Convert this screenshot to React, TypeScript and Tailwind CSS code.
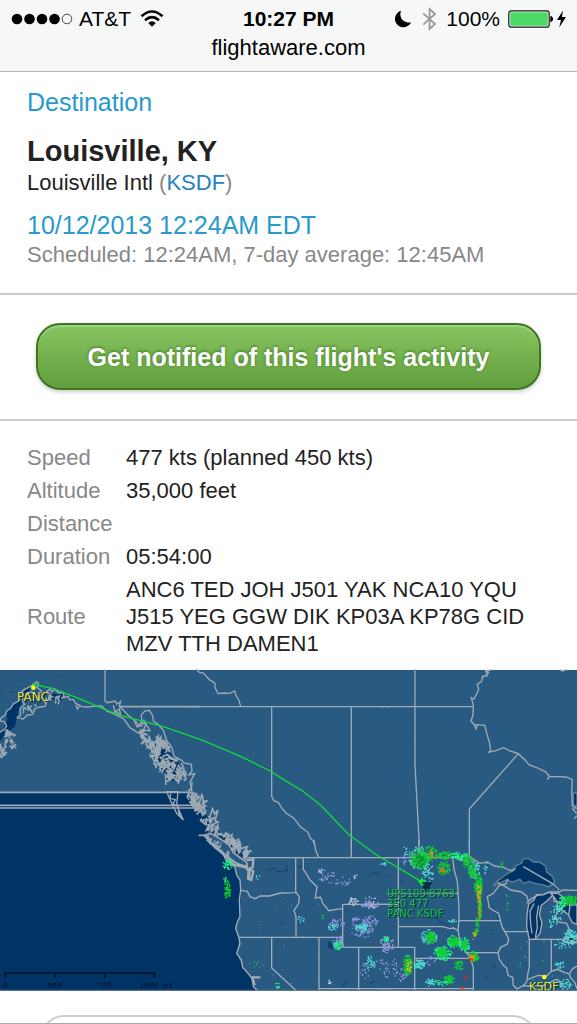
import React from "react";

type Point = [number, number];

const CYAN = "#22ee88";
const AQUA = "#54d8d0";
const GREEN = "#10cc30";
const LILAC = "#8e96dc";
const PALE = "#b9bde0";

function createRandom(seed: number) {
  let state = seed;
  return () => {
    state = (state * 1664525 + 1013904223) % 4294967296;
    return state / 4294967296;
  };
}

/** Scatter of small square echoes inside an ellipse. */
function echoPath(seed: number, cx: number, cy: number, rx: number, ry: number, count: number) {
  const random = createRandom(seed);
  let d = "";
  for (let i = 0; i < count; i++) {
    const angle = random() * Math.PI * 2;
    const radius = Math.pow(random(), 0.6);
    const x = Math.round(cx - 2 + Math.cos(angle) * radius * rx * 1.1);
    const y = Math.round(cy - 2 + Math.sin(angle) * radius * ry * 1.1);
    d += `M${x} ${y}h4v4h-4z`;
  }
  return d;
}

/** Ragged inlet strokes that wander around a centre line. */
function fjordPath(seed: number, line: Point[], spread: number, perSegment: number) {
  const random = createRandom(seed);
  let d = "";
  for (let i = 0; i < line.length - 1; i++) {
    const [x1, y1] = line[i];
    const [x2, y2] = line[i + 1];
    for (let n = 0; n < perSegment; n++) {
      const t = random();
      let x = x1 + (x2 - x1) * t + (random() - 0.5) * spread * 2;
      let y = y1 + (y2 - y1) * t + (random() - 0.5) * spread;
      d += `M${Math.round(x)} ${Math.round(y)}`;
      for (let k = 0; k < 5; k++) {
        x += (random() - 0.48) * 13;
        y += (random() - 0.48) * 17;
        d += `L${Math.round(x)} ${Math.round(y)}`;
      }
    }
  }
  return d;
}

type Echo = [number, number, number, number, number, string];

const westEchoes: Echo[] = [
  [115, 74, 15, 13, 45, CYAN],
  [108, 118, 6, 8, 8, CYAN],
  [112, 150, 9, 26, 55, GREEN],
  [410, 110, 22, 22, 28, LILAC],
  [396, 92, 12, 8, 9, PALE],
  [458, 125, 20, 16, 20, LILAC],
  [498, 110, 6, 10, 6, PALE],
  [583, 72, 10, 4, 8, AQUA],
  [490, 185, 15, 12, 32, PALE],
  [540, 195, 26, 10, 48, LILAC],
  [545, 188, 22, 17, 20, PALE],
  [440, 250, 22, 12, 40, LILAC],
  [430, 262, 14, 8, 22, AQUA],
  [520, 262, 38, 28, 80, LILAC],
  [540, 245, 22, 20, 40, LILAC],
  [495, 238, 10, 6, 16, LILAC],
  [515, 264, 17, 12, 55, AQUA],
  [588, 298, 12, 7, 28, CYAN],
  [588, 322, 13, 17, 30, LILAC],
  [445, 306, 15, 20, 45, LILAC],
  [446, 316, 14, 12, 42, CYAN],
  [333, 240, 9, 12, 10, AQUA],
  [396, 232, 4, 12, 4, GREEN],
  [543, 368, 18, 20, 35, AQUA],
  [525, 392, 14, 22, 18, LILAC],
  [590, 386, 8, 25, 12, LILAC],
  [419, 426, 5, 5, 9, PALE],
  [262, 436, 8, 11, 10, CYAN],
  [198, 374, 22, 10, 5, GREEN],
  [205, 110, 8, 28, 4, AQUA],
  [310, 250, 130, 180, 15, "#3a8aa4"],
];

const eastEchoes: Echo[] = [
  [118, 55, 28, 33, 120, AQUA],
  [119, 58, 25, 27, 190, GREEN],
  [120, 62, 16, 16, 60, "#07912c"],
  [152, 42, 19, 22, 75, GREEN],
  [153, 40, 10, 13, 22, "#b1a51b"],
  [145, 98, 17, 26, 48, AQUA],
  [192, 46, 22, 11, 65, GREEN],
  [192, 85, 18, 20, 75, GREEN],
  [189, 92, 7, 8, 16, "#c77b14"],
  [235, 48, 28, 11, 72, CYAN],
  [263, 66, 14, 20, 75, GREEN],
  [283, 87, 15, 26, 42, AQUA],
  [276, 92, 11, 20, 65, GREEN],
  [295, 135, 11, 31, 135, GREEN],
  [297, 160, 6, 26, 36, "#dfac17"],
  [300, 202, 5, 36, 62, GREEN],
  [299, 196, 3, 45, 30, "#d79b13"],
  [291, 255, 5, 25, 34, GREEN],
  [283, 285, 6, 16, 18, "#a4ae20"],
  [80, 34, 10, 14, 12, AQUA],
  [72, 60, 7, 12, 10, LILAC],
  [315, 82, 6, 27, 9, AQUA],
  [366, 74, 6, 8, 10, GREEN],
  [382, 184, 4, 30, 8, GREEN],
  [148, 291, 22, 20, 80, AQUA],
  [152, 293, 14, 16, 110, GREEN],
  [222, 305, 20, 18, 85, CYAN],
  [222, 305, 14, 13, 90, GREEN],
  [254, 315, 15, 20, 65, CYAN],
  [254, 314, 8, 13, 48, GREEN],
  [190, 340, 25, 20, 95, CYAN],
  [188, 337, 15, 13, 80, GREEN],
  [281, 350, 15, 16, 62, GREEN],
  [278, 354, 10, 10, 28, "#df9813"],
  [274, 358, 6, 4, 10, "#d22b18"],
  [84, 378, 13, 30, 125, GREEN],
  [87, 376, 7, 18, 24, "#d2bc17"],
  [118, 373, 15, 13, 70, AQUA],
  [152, 364, 17, 14, 13, LILAC],
  [237, 377, 14, 14, 35, GREEN],
  [208, 419, 17, 12, 55, GREEN],
  [184, 429, 20, 8, 24, CYAN],
  [151, 428, 13, 11, 30, AQUA],
  [249, 445, 5, 5, 8, "#d64718"],
  [256, 412, 5, 12, 8, "#bf3119"],
  [20, 302, 20, 13, 22, LILAC],
  [21, 300, 9, 5, 16, CYAN],
  [25, 322, 16, 12, 22, LILAC],
  [45, 380, 8, 28, 14, LILAC],
  [8, 375, 10, 35, 10, LILAC],
  [65, 403, 16, 23, 22, LILAC],
  [222, 242, 15, 4, 14, AQUA],
  [570, 181, 24, 13, 110, GREEN],
  [546, 190, 11, 17, 50, CYAN],
  [533, 219, 20, 20, 42, AQUA],
  [518, 250, 12, 14, 20, AQUA],
  [573, 289, 20, 19, 90, AQUA],
  [549, 311, 28, 14, 30, AQUA],
  [540, 374, 14, 10, 20, AQUA],
  [556, 433, 18, 14, 38, AQUA],
  [485, 365, 90, 60, 12, "#419cb2"],
];

function Echoes({ items, seed }: { items: Echo[]; seed: number }) {
  return (
    <g stroke="none">
      {items.map(([cx, cy, rx, ry, count, fill], i) => (
        <path key={i} d={echoPath(seed + i * 97, cx, cy, rx, ry, count)} fill={fill} />
      ))}
    </g>
  );
}

function FlightMap() {
  return (
    <svg
      viewBox="0 0 1731 963"
      className="block h-auto w-full shrink-0 overflow-visible bg-[#295b82]"
      role="img"
      aria-label="Flight track from PANC to KSDF"
    >
      {/* Pacific */}
      <path
        d="M0 367H562L582 410 617 430 628 460 620 510 645 532 680 570 705 592 710 620 722 640 720 740 707 775 717 805 710 850 728 890 755 925 762 950 773 963H0Z"
        fill="#003366"
      />

      {/* Alaska and the north-west coast */}
      <g transform="translate(0 -15)" fill="none" stroke="#9da9b2" strokeWidth="4">
        <path
          d="M96 62L72 78 60 108 40 120 18 143 22 165 8 195 0 200V228L18 205 45 185 52 150 65 112 85 82Z"
          fill="#003366"
          stroke="none"
        />
        <path d="M158 86L190 88 188 104 170 110 155 100ZM452 230L488 220 500 255 535 290 548 330 515 350 480 315 462 275Z" fill="#003366" stroke="none" />
        <path d="M96 62L72 74 62 84 60 106 40 116 32 130 20 138 16 150 4 158 0 166M0 168L12 170 20 182 14 192 0 202" />
        <path d="M96 62L110 50 116 56 110 66 124 78 120 100 95 80 76 88 66 106 74 118 60 130 62 150 52 158 70 162 82 150 98 148 104 132 120 126 136 124 140 108 152 104 150 86 140 80 150 72 156 80 165 72 175 84 190 82 192 98 205 94 208 104 220 104 228 116 240 120 232 132 228 120M240 124L262 126 304 122 320 138 345 148 372 162 390 188 418 206" />
        <path d="M315 13V108L322 113 346 108 350 118 362 110 358 124 384 150 408 170 418 184 426 182 424 150 434 138 448 136 458 152 460 168 474 178 490 196 500 226 516 248 522 274 545 286 552 294 574 298 576 318 566 330 584 326 570 352 574 366 578 400 600 430" />
        <path d="M358 125H600" strokeWidth="5" />
        <path d="M340 120L345 142 358 132 362 150 342 136M402 168L412 186 424 172 438 178 430 195 450 198 430 164" />
        <path d={fjordPath(10, [[38, 200], [24, 235], [5, 268]], 13, 10)} />
        <path d={fjordPath(38, [[75, 125], [140, 100], [200, 96]], 11, 6)} />
        <path d={fjordPath(21, [[430, 205], [450, 240], [475, 275], [510, 338]], 15, 17)} strokeWidth="5" />
        <path d={fjordPath(47, [[470, 215], [495, 265], [530, 340]], 16, 22)} strokeWidth="5" />
        <path d={fjordPath(52, [[530, 305], [555, 345]], 14, 14)} />
        <path d={fjordPath(98, [[562, 368], [595, 430]], 9, 14)} />
        <path d="M500 380H534L530 420 550 465 530 445 512 408ZM512 386L510 400 526 404 518 418 534 422 536 444 546 458" />
        <path d="M0 382H562M0 421H594M0 429H600" strokeWidth="5" />
        <path d="M0 86h8M32 80h8M90 44h6M55 66h4M183 30l4 8M145 40h4M190 365h4" stroke="#164b77" />
      </g>

      {/* British Columbia coast and Vancouver Island */}
      <g transform="translate(420 270)" fill="none" stroke="#9da9b2" strokeWidth="5">
        <path d="M208 196L230 210 262 232 290 262 312 280 328 296 322 308 296 296 272 268 246 244 216 224Z" fill="#0a3a6c" stroke="none" />
        <path d={fjordPath(74, [[150, 110], [183, 140], [206, 195]], 9, 15)} />
        <path d={fjordPath(62, [[204, 202], [245, 226], [278, 250], [322, 290]], 8, 10)} />
        <path d="M178 130L186 102 190 125 203 122 184 134M208 174L218 146 224 162 234 150 225 182 234 186 212 196M250 230L258 218 266 230 276 224 272 250M290 254L296 240 302 266 322 260 312 278 328 280" />
        <path
          d="M192 226L212 220 240 236 268 256 280 278 302 294 320 307 322 319 298 314 278 304 260 293 242 274 221 257Z"
          fill="#295b82"
        />
        <path d="M198 228L212 240 210 250 232 262 248 278 268 294 290 310 320 322M176 226H192" />
        <path d={fjordPath(112, [[205, 236], [232, 260], [268, 292]], 4, 7)} strokeWidth="3" />
      </g>

      {/* Territories and provinces */}
      <g transform="translate(570 -15)" fill="none" stroke="#a0aab3" strokeWidth="4">
        <path d="M20 12L28 22 40 24 58 44 74 54 76 70 84 86 105 84 118 86 134 78 138 92 146 104 152 124M0 125H600M245 125V394L252 408 265 412 276 430 288 444 310 458 332 486 354 502 360 518 372 530 374 540M484 125V540" />
      </g>
      <g transform="translate(1140 -15)" fill="none" stroke="#a0aab3" strokeWidth="4">
        <path d="M0 125H278M105 12V300L118 540M334 14L318 20 322 32 308 34 304 50 292 58 296 74 290 86 282 102 274 98 280 120 279 150 273 168 282 178 314 181 322 212 329 235 332 258 324 262 350 256 371 248 390 258 415 266 434 284 448 300 466 306 496 320 508 334 502 344 508 334 558 336 577 344 575 380 577 424 591 430M415 266L268 432V540M282 178L288 192 292 180M315 14L326 24 306 38M540 14L546 18 560 14M577 430L588 444 591 440M582 461L591 452" />
        <path d="M580 384H591V422H580ZM582 431H591V447Z" fill="#003366" stroke="#7e94a8" strokeWidth="3" />
      </g>

      {/* Western states */}
      <g transform="translate(570 510)" fill="none" stroke="#a3acb5" strokeWidth="4">
        <path
          d="M50 0L64 12 75 24 98 42 110 60 135 82 140 105 150 120 152 150 148 180 150 230 142 246 137 265 147 294 150 312 140 340 154 360 158 382 176 402 186 416 190 440 203 452"
        />
        <path d="M166 53H600M317 53V156L328 170 326 190 312 212 318 230V291M340 53V88L352 106 360 120 381 140 376 174 392 172 398 190 412 206 416 212 440 208 458 206M152 151L172 154 180 170 196 176 210 168 238 168 272 159 317 158M144 292H460M245 292V384L319 452M387 292V452M458 193V322M458 193H600M458 322H600M506 322V452M387 446H600M371 0L378 34 386 52M484 0V53" />
        <path d="M170 60L190 58 188 82 176 86 190 94 184 120 174 116 176 94 168 82 130 74 116 58M178 92V118M184 412H211M188 416L194 436" strokeWidth="7" />
        <path d={fjordPath(49, [[118, 0], [166, 48]], 8, 12)} />
        <path d="M412 302L430 312 428 328 414 324Z" fill="#103f70" stroke="none" />
        <path d="M235 92L248 84 262 96 292 92 288 66M535 106L548 98 560 102 572 94M454 440L474 424M324 82L336 78M194 280h6M268 250h7M236 327h5M252 350h5M310 398h5M178 346h4M464 206l8 8M540 430l14-8" stroke="#19496f" />
        <Echoes items={westEchoes} seed={41} />
      </g>

      {/* Central states and the Great Lakes */}
      <g transform="translate(1140 510)" fill="none" stroke="#a3acb5" strokeWidth="4">
        <g fill="#003366">
          <path d="M340 138L352 124 372 108 390 96 398 94 407 78 424 70 430 57 445 55 460 66 478 66 496 78 500 96 518 110 524 128 506 140 486 134 464 130 448 124 430 130 420 118 398 126 378 120 362 128Z" stroke="#637d96" />
          <path d="M448 298L440 262 441 224 446 192 462 180 469 164 490 164 508 156 518 166 500 184 484 196 478 224 486 248 480 280 464 298Z" />
          <path d="M514 160L534 160 552 174 564 190 576 204 568 226 552 214 532 206 532 186Z" />
          <path d="M570 196L591 194V254L576 246 566 226Z" />
          <path d="M550 302L564 292 591 290V306L566 310Z" stroke="#9da9b2" />
        </g>
        <path d="M0 53H218L228 49 240 60 266 62M117 0V53M268 0V48L280 58 300 70 322 66 344 78 370 82 392 92 407 86M218 53L222 88 232 124 236 186 237 242M55 53V322M0 193H55M55 260H190L208 266 220 264 234 272M234 242H360M237 242L234 272 240 302 250 322 259 338 270 352 276 370 280 382V452M259 338H354M55 322H104V452M0 322H55M104 355H272M0 446H280M130 160H236" />
        <path d="M384 116L378 132 358 136 340 160 322 170 328 204 356 220 362 244 366 260 374 274 386 296 382 312 362 322 354 338 358 358 370 376 380 384 384 406 398 412 400 436 412 448M376 275H446M448 298V380L443 404 440 426 428 438 412 446M448 298H552M514 298V392M352 128L376 140 392 150 424 156 440 168 446 188M440 190L451 178 472 166 490 164 510 156 538 156 548 150 591 151M430 80L516 130 538 150M462 190L450 214 452 252 456 280M476 196L470 230 472 262 466 292M444 418L474 406 500 408 514 394 532 388 554 398 568 402 576 388 591 378M568 402L572 414 584 426 591 446M520 168L522 184 548 186 554 198 536 206 526 230 534 246 560 250 566 264 560 286 548 302 574 310 591 308M430 438L450 438 490 436 530 418 554 442" />
        <path d="M164 230L184 248 206 258M138 110L142 134 132 140M62 120l8 8M24 110h8M332 386l16-10M312 414l12-7M332 278l8 6M216 198h5M350 230l5 8M120 224l9 8M496 190l6 4M518 138l14 10" stroke="#174b75" />
        <Echoes items={eastEchoes} seed={201} />
      </g>

      {/* Flight track */}
      <path
        d="M96 42L160 56 230 83 350 133 490 170 600 208 660 233 730 263 805 300 860 334 908 363 962 406 1045 493 1130 555 1265 635"
        fill="none"
        stroke="#12d83e"
        strokeWidth="4"
      />
      <path d="M1252 632L1262 630 1266 620 1270 630 1280 636 1270 640 1266 650 1261 641Z" fill="#10ed32" />
      <path d="M1290 656L1272 640 1292 640 1274 660M1281 650L1268 652" fill="none" stroke="#092c3c" strokeWidth="6" />
      <circle cx="100" cy="53" r="7" fill="#ffff16" />
      <circle cx="1633" cy="921" r="7" fill="#ffff16" />

      {/* Airport and aircraft labels */}
      <g fontFamily='"DejaVu Sans", sans-serif' className="[filter:drop-shadow(4px_3px_0_#0a2c40)]">
        <text x="51" y="94" fontSize="36" fill="#e8e236">PANC</text>
        <text x="1587" y="961" fontSize="34" fill="#e8e236">KSDF</text>
        <g fontSize="30" fill="#14c83a">
          <text x="1161" y="681">UPS109 B763</text>
          <text x="1161" y="711">350 477</text>
          <text x="1161" y="740">PANC KSDF</text>
        </g>
      </g>
      <path d="M1160 671H1368" stroke="#5f9a78" strokeWidth="3" />

      {/* Distance scale */}
      <path d="M16 923V909H463V923M165 909V923M314 909V923" fill="none" stroke="#001126" strokeWidth="4" />
      <g fontFamily='"Liberation Mono", monospace' fontSize="24" fill="#001126">
        <text x="16" y="953" textAnchor="middle">0</text>
        <text x="165" y="953" textAnchor="middle">360</text>
        <text x="314" y="953" textAnchor="middle">720</text>
        <text x="418" y="953">1080 mi</text>
      </g>
      <path d="M0 961H1731" stroke="#657e98" strokeWidth="3" />
    </svg>
  );
}

function StatusBar() {
  return (
    <header className="shrink-0 border-b border-[#b5b6b7] bg-[#f6f8f8] pt-1 pb-2 text-black">
      <div className="grid h-[29px] grid-cols-[1fr_auto_1fr] items-center text-[21px] leading-[29px]">
        <div className="flex items-center pl-[11px]">
          <svg width="62" height="12" viewBox="0 0 62 12" aria-label="Signal strength" role="img">
            <circle cx="6" cy="6" r="5.3" />
            <circle cx="18.5" cy="6" r="5.3" />
            <circle cx="31" cy="6" r="5.3" />
            <circle cx="43.5" cy="6" r="5.3" />
            <circle cx="56" cy="6" r="4.8" fill="none" stroke="#333" strokeWidth="0.9" />
          </svg>
          <span className="ml-[6px]">AT&amp;T</span>
          <svg className="ml-[9px]" width="24" height="18" viewBox="0 0 24 18" aria-label="Wi-Fi" role="img">
            <path d="M1.5 6.3Q12-3.2 22.5 6.3M5 10.2Q12 4 19 10.2" fill="none" stroke="#000" strokeWidth="2.5" />
            <path d="M8.2 13Q12 9.6 15.8 13L12 16.8Z" />
          </svg>
        </div>
        <time className="font-bold">10:27 PM</time>
        <div className="flex items-center justify-end pr-[10px]">
          <svg width="18" height="18" viewBox="0 0 18 18" aria-label="Do not disturb" role="img">
            <path d="M7 .8C4.8 6.2 8.1 13.3 17 12.4A8.4 8.4 0 1 1 7 .8Z" />
          </svg>
          <svg className="ml-[10px]" width="15" height="24" viewBox="0 0 15 24" aria-label="Bluetooth" role="img">
            <path d="M1.2 6.3L13 17 7.6 22V2L13 7 1.2 17.7" fill="none" stroke="#999" strokeWidth="1.8" />
          </svg>
          <span className="ml-[9px]">100%</span>
          <svg className="ml-2" width="46" height="18" viewBox="0 0 46 18" aria-label="Battery full" role="img">
            <rect x="0.8" y="0.8" width="40.4" height="16.4" rx="2.5" fill="#fff" stroke="#111" strokeWidth="1.2" />
            <rect x="2.2" y="2.2" width="37.6" height="13.6" rx="1" fill="#4cd964" />
            <path d="M42.3 6C46 6 46 12 42.3 12Z" />
          </svg>
          <svg className="ml-[2px]" width="11" height="18" viewBox="0 0 11 18" aria-label="Charging" role="img">
            <path d="M7 .5L1 10H5L3.2 17.5 10 7H6Z" />
          </svg>
        </div>
      </div>
      <p className="text-center text-[22px] leading-[30px]">flightaware.com</p>
    </header>
  );
}

const details = [
  { label: "Speed", value: "477 kts (planned 450 kts)" },
  { label: "Altitude", value: "35,000 feet" },
  { label: "Distance", value: "" },
  { label: "Duration", value: "05:54:00" },
  { label: "Route", value: "ANC6 TED JOH J501 YAK NCA10 YQU J515 YEG GGW DIK KP03A KP78G CID MZV TTH DAMEN1" },
];

export default function App() {
  return (
    <div className="flex h-screen flex-col overflow-hidden border-b border-[#aaa] bg-white font-['Liberation_Sans',sans-serif] text-[22px] leading-[27px] text-[#222]">
      <StatusBar />
      <main className="flex flex-col">
        <section className="border-b-2 border-[#ccc] px-[27px] pt-[15px] pb-[25px]">
          <h2 className="text-[25px] leading-[30px] text-[#2799cd]">Destination</h2>
          <h1 className="mt-4 text-[29px] leading-[36px] font-bold">Louisville, KY</h1>
          <p>
            Louisville Intl{" "}
            <span className="text-[#888]">
              (<a href="#ksdf" className="text-[#2482c4]">KSDF</a>)
            </span>
          </p>
          <p className="mt-[13px] text-[25px] leading-[32px] text-[#2799cd]">10/12/2013 12:24AM EDT</p>
          <p className="text-[#888]">Scheduled: 12:24AM, 7-day average: 12:45AM</p>
        </section>

        <section className="border-b-2 border-[#ccc] px-9 pt-7 pb-[29px]">
          <button
            type="button"
            className="block h-[67px] w-full rounded-[24px] border-2 border-[#3c761e] bg-gradient-to-b from-[#88c662] to-[#629e3b] pt-[2px] text-[25px] font-bold text-white shadow-[0_2px_4px_rgba(0,0,0,0.2),inset_0_2px_1px_rgba(255,255,255,0.2)] [text-shadow:0_-1px_3px_rgba(30,80,10,0.6)]"
          >
            Get notified of this flight's activity
          </button>
        </section>

        <section className="px-[27px] pt-5 pb-[10px]">
          <table className="w-full border-collapse text-left">
            <tbody>
              {details.map(({ label, value }) => (
                <tr key={label}>
                  <th scope="row" className="w-[99px] py-[3px] align-middle font-normal text-[#888]">
                    {label}
                  </th>
                  <td className="py-[3px]">{value}</td>
                </tr>
              ))}
            </tbody>
          </table>
        </section>

        <FlightMap />

        <section className="px-10 pt-6">
          <button
            type="button"
            aria-label="More flight options"
            className="block h-[60px] w-full rounded-[24px] border-2 border-[#ccc] bg-white"
          />
        </section>
      </main>
    </div>
  );
}
